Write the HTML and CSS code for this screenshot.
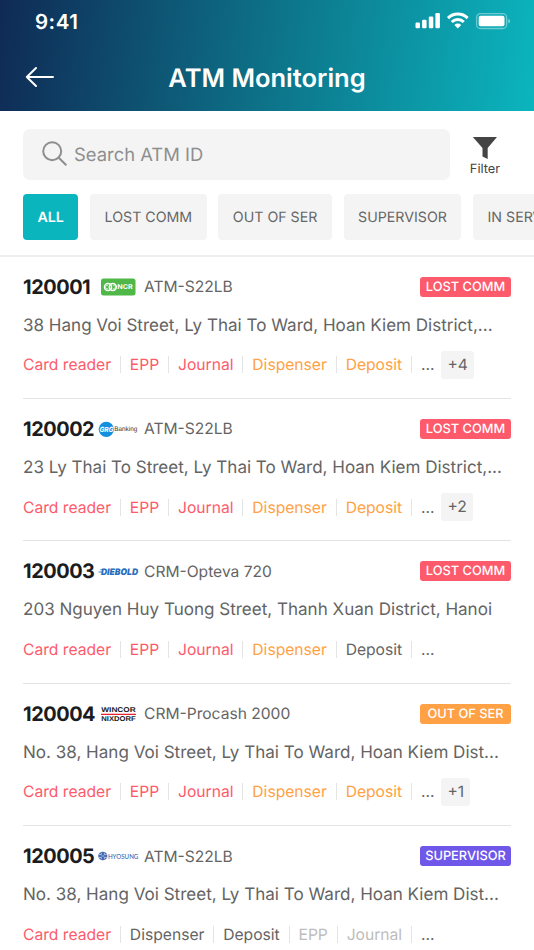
FILE: index.html
```
<!DOCTYPE html>
<html lang="en">
<head>
    <meta charset="utf-8" />
    <meta name="viewport" content="width=device-width, initial-scale=1.0" />
    <title>ATM Monitoring</title>
    <link rel="stylesheet" href="styles.css">
</head>
<body>
    <header class="header">
        <div class="status-bar">
            <span class="time">9:41</span>
            <svg class="status-icons" width="96" height="18" viewBox="0 0 96 18">
                <g fill="#fff">
                    <rect x="0.5" y="10.5" width="4.5" height="5.7" rx="1.2" />
                    <rect x="7.1" y="7.8" width="4.5" height="8.4" rx="1.2" />
                    <rect x="13.8" y="4.6" width="4.5" height="11.6" rx="1.2" />
                    <rect x="20.4" y="1" width="4.5" height="15.2" rx="1.2" />
                </g>
                <g fill="none" stroke="#fff" stroke-width="3">
                    <path d="M33 6.1a14 14 0 0 1 19.6 0" />
                    <path d="M36.8 10a8.6 8.6 0 0 1 12 0" />
                </g>
                <path d="M39.4 12.9a4.8 4.8 0 0 1 6.8 0l-3.4 3.6z" fill="#fff" />
                <rect x="61.6" y="1.7" width="30" height="14.8" rx="3.8" fill="none" stroke="#fff" stroke-opacity=".4" stroke-width="1.3" />
                <rect x="63.7" y="3.7" width="25.8" height="10.6" rx="2" fill="#fff" />
                <path d="M93.3 6.8v4.8c1-.4 1.8-1.3 1.8-2.4s-.8-2-1.8-2.4z" fill="#fff" fill-opacity=".45" />
            </svg>
        </div>
        <div class="title-bar">
            <svg class="back" width="30" height="22" viewBox="0 0 30 22">
                <path d="M28 11H1.8M11 2L1.8 11l9.2 9" fill="none" stroke="#fff" stroke-width="2" stroke-linecap="round" stroke-linejoin="round" />
            </svg>
            <h1>ATM Monitoring</h1>
        </div>
    </header>

    <section class="tools">
        <div class="search-row">
            <div class="search">
                <svg width="26" height="26" viewBox="0 0 26 26">
                    <g fill="none" stroke="#8e8e8e" stroke-width="2" stroke-linecap="round">
                        <circle cx="10.2" cy="10.2" r="9" />
                        <path d="M16.8 16.8l7 7" />
                    </g>
                </svg>
                <span>Search ATM ID</span>
            </div>
            <div class="filter">
                <svg width="26" height="24" viewBox="0 0 26 24">
                    <path d="M.3 0h25.2l-9.7 11.6v11.3l-5.4-2.6v-8.7z" fill="#444" />
                </svg>
                <span>Filter</span>
            </div>
        </div>
        <div class="chips">
            <span class="chip active">ALL</span>
            <span class="chip">LOST COMM</span>
            <span class="chip">OUT OF SER</span>
            <span class="chip">SUPERVISOR</span>
            <span class="chip">IN SERVICE</span>
        </div>
    </section>

    <main class="list">
        <article class="atm">
            <div class="atm-head">
                <span class="atm-id">120001</span>
                <svg class="logo" width="44" height="20" viewBox="0 0 44 20">
                    <rect x="4" y="1.5" width="34.5" height="17" rx="2.5" fill="#50b848" />
                    <g fill="none" stroke="#fff" stroke-width="1.5">
                        <circle cx="11" cy="10" r="3.5" />
                        <circle cx="15.8" cy="10" r="3.5" />
                        <path d="M11 8.5a1.7 1.7 0 1 0 0 3M15.8 8.5a1.7 1.7 0 1 1 0 3" stroke-width=".7" />
                    </g>
                    <text class="logo-ncr" x="20.3" y="12.4" textLength="15.5" lengthAdjust="spacingAndGlyphs">NCR</text>
                </svg>
                <span class="model">ATM-S22LB</span>
                <span class="status lost">LOST COMM</span>
            </div>
            <p class="address">38 Hang Voi Street, Ly Thai To Ward, Hoan Kiem District,...</p>
            <div class="parts">
                <span class="part error">Card reader</span>
                <span class="part error">EPP</span>
                <span class="part error">Journal</span>
                <span class="part warning">Dispenser</span>
                <span class="part warning">Deposit</span>
                <span class="part">...</span>
                <span class="more">+4</span>
            </div>
        </article>

        <article class="atm">
            <div class="atm-head">
                <span class="atm-id">120002</span>
                <svg class="logo" width="44" height="20" viewBox="0 0 44 20">
                    <circle cx="9.3" cy="10.3" r="7.6" fill="#148fe0" />
                    <text class="logo-grg" x="2.4" y="13" textLength="14" lengthAdjust="spacingAndGlyphs">GRG</text>
                    <text class="logo-banking" x="17.3" y="12.4" textLength="23" lengthAdjust="spacingAndGlyphs">Banking</text>
                </svg>
                <span class="model">ATM-S22LB</span>
                <span class="status lost">LOST COMM</span>
            </div>
            <p class="address">23 Ly Thai To Street, Ly Thai To Ward, Hoan Kiem District,...</p>
            <div class="parts">
                <span class="part error">Card reader</span>
                <span class="part error">EPP</span>
                <span class="part error">Journal</span>
                <span class="part warning">Dispenser</span>
                <span class="part warning">Deposit</span>
                <span class="part">...</span>
                <span class="more">+2</span>
            </div>
        </article>

        <article class="atm">
            <div class="atm-head">
                <span class="atm-id">120003</span>
                <svg class="logo" width="44" height="20" viewBox="0 0 44 20">
                    <path d="M3.3 8.7h3M1.5 11h4" stroke="#2a6ebb" stroke-width=".9" />
                    <text class="logo-diebold" x="4" y="13.6" textLength="37" lengthAdjust="spacingAndGlyphs">DIEBOLD</text>
                </svg>
                <span class="model">CRM-Opteva 720</span>
                <span class="status lost">LOST COMM</span>
            </div>
            <p class="address">203 Nguyen Huy Tuong Street, Thanh Xuan District, Hanoi</p>
            <div class="parts">
                <span class="part error">Card reader</span>
                <span class="part error">EPP</span>
                <span class="part error">Journal</span>
                <span class="part warning">Dispenser</span>
                <span class="part">Deposit</span>
                <span class="part">...</span>
            </div>
        </article>

        <article class="atm">
            <div class="atm-head">
                <span class="atm-id">120004</span>
                <svg class="logo" width="44" height="20" viewBox="0 0 44 20">
                    <text class="logo-wincor" x="4.3" y="8.4" textLength="34.4" lengthAdjust="spacingAndGlyphs">WINCOR</text>
                    <path d="M4 10.4h35" stroke="#e5222f" stroke-width="1.2" />
                    <text class="logo-wincor" x="4.3" y="16.9" textLength="34.4" lengthAdjust="spacingAndGlyphs">NIXDORF</text>
                </svg>
                <span class="model">CRM-Procash 2000</span>
                <span class="status out">OUT OF SER</span>
            </div>
            <p class="address">No. 38, Hang Voi Street, Ly Thai To Ward, Hoan Kiem Dist...</p>
            <div class="parts">
                <span class="part error">Card reader</span>
                <span class="part error">EPP</span>
                <span class="part error">Journal</span>
                <span class="part warning">Dispenser</span>
                <span class="part warning">Deposit</span>
                <span class="part">...</span>
                <span class="more">+1</span>
            </div>
        </article>

        <article class="atm">
            <div class="atm-head">
                <span class="atm-id">120005</span>
                <svg class="logo" width="44" height="20" viewBox="0 0 44 20">
                    <ellipse cx="5.8" cy="10" rx="4.6" ry="4.2" fill="#3d66ae" />
                    <path d="M1.7 8.6h2.6v-2M9.9 8.6H7.3v-2M1.7 11.4h2.6v2M9.9 11.4H7.3v2M4.3 10h3" fill="none" stroke="#fff" stroke-width=".6" />
                    <text class="logo-hyosung" x="10.9" y="12.6" textLength="30.5" lengthAdjust="spacingAndGlyphs">HYOSUNG</text>
                </svg>
                <span class="model">ATM-S22LB</span>
                <span class="status supervisor">SUPERVISOR</span>
            </div>
            <p class="address">No. 38, Hang Voi Street, Ly Thai To Ward, Hoan Kiem Dist...</p>
            <div class="parts">
                <span class="part error">Card reader</span>
                <span class="part">Dispenser</span>
                <span class="part">Deposit</span>
                <span class="part disabled">EPP</span>
                <span class="part disabled">Journal</span>
                <span class="part">...</span>
            </div>
        </article>
    </main>
</body>
</html>
```
FILE: styles.css
```
* {
    box-sizing: border-box;
}
body {
    margin: 0;
    height: 950px;
    overflow: hidden;
    font-family: Inter, "Liberation Sans", sans-serif;
    background-color: #fff;
    color: #646464;
    white-space: nowrap;
    text-rendering: geometricPrecision;
}
.header {
    height: 111px;
    background: linear-gradient(97deg, #0f2a55 0%, #0d7389 51%, #0bb5be 100%);
    color: #fff;
}
.status-bar {
    display: flex;
    justify-content: space-between;
    align-items: center;
    height: 43px;
    padding: 0 23px 0 35px;
}
.time {
    font-size: 20.5px;
    font-weight: 600;
    letter-spacing: 0.5px;
}
.status-icons {
    margin-top: -2px;
}
.title-bar {
    display: grid;
    grid-template-columns: 30px 1fr 30px;
    align-items: center;
    height: 68px;
    padding: 0 25px;
}
h1 {
    margin: 0;
    padding-top: 2px;
    font-size: 25.5px;
    font-weight: 600;
    text-align: center;
}
.tools {
    padding: 17.5px 0 15.5px 23px;
    border-bottom: 2px solid #efefef;
}
.search-row {
    display: flex;
    height: 51px;
}
.search {
    display: flex;
    align-items: center;
    gap: 6px;
    width: 427px;
    padding-left: 19px;
    border-radius: 7px;
    background-color: #f4f4f4;
    color: #8e8e8e;
    font-size: 18.4px;
}
.search span {
    padding-top: 2px;
}
.filter {
    display: flex;
    flex-direction: column;
    align-items: center;
    width: 70px;
    padding-top: 8.5px;
    color: #444;
    font-size: 12.8px;
    line-height: 19.5px;
}
.chips {
    display: flex;
    gap: 11.7px;
    margin-top: 14.5px;
    overflow: hidden;
}
.chip {
    flex: none;
    height: 45.5px;
    padding: 0 14.5px;
    border-radius: 4px;
    background-color: #f4f4f4;
    color: #666;
    font-size: 14.2px;
    line-height: 48px;
}
.chip.active {
    background-color: #0bb5be;
    color: #fff;
    font-weight: 600;
}
.list {
    margin-top: -0.5px;
    padding: 0 23px;
}
.atm {
    height: 142.4px;
    padding-top: 20px;
    border-bottom: 1px solid #e4e4e4;
}
.atm-head {
    display: flex;
    align-items: center;
    height: 20px;
}
.atm-id {
    width: 74px;
    color: #1c1c1c;
    font-size: 19.9px;
    font-weight: 700;
    letter-spacing: -0.45px;
}
.logo {
    flex: none;
    width: 44px;
    margin-right: 3px;
}
.logo-ncr {
    font: 700 6.6px Inter, sans-serif;
    fill: #fff;
}
.logo-grg {
    font: italic 700 7px Inter, sans-serif;
    fill: #fff;
}
.logo-banking {
    font: 500 6.6px "Liberation Sans", sans-serif;
    fill: #333;
}
.logo-diebold {
    font: italic 900 9px Inter, sans-serif;
    fill: #2a6ebb;
}
.logo-wincor {
    font: 700 7px "Liberation Sans", sans-serif;
    fill: #222;
}
.logo-hyosung {
    font: 500 7px Lato, sans-serif;
    fill: #3d66ae;
}
.model {
    font-size: 15.6px;
}
.status {
    width: 91px;
    height: 20px;
    margin-left: auto;
    border-radius: 3px;
    color: #fff;
    font-size: 12.8px;
    font-weight: 500;
    line-height: 21.4px;
    text-align: center;
}
.lost {
    background-color: #fd5b6b;
}
.out {
    background-color: #ffa144;
}
.supervisor {
    background-color: #6f58e9;
}
.address {
    margin: 17px 0 13.3px;
    font-size: 17.05px;
    line-height: 24px;
}
.parts {
    display: flex;
    align-items: center;
    height: 28px;
    font-size: 15.65px;
}
.part {
    line-height: 17px;
}
.part + .part {
    margin-left: 8.9px;
    padding-left: 8.9px;
    border-left: 1px solid #e4e4e4;
}
.error {
    color: #fd5b6b;
}
.warning {
    color: #ffa144;
}
.disabled {
    color: #bdbdbd;
}
.more {
    height: 28px;
    margin-left: 7px;
    padding: 0 6px;
    border-radius: 3px;
    background-color: #f4f4f4;
    line-height: 28px;
}
```
